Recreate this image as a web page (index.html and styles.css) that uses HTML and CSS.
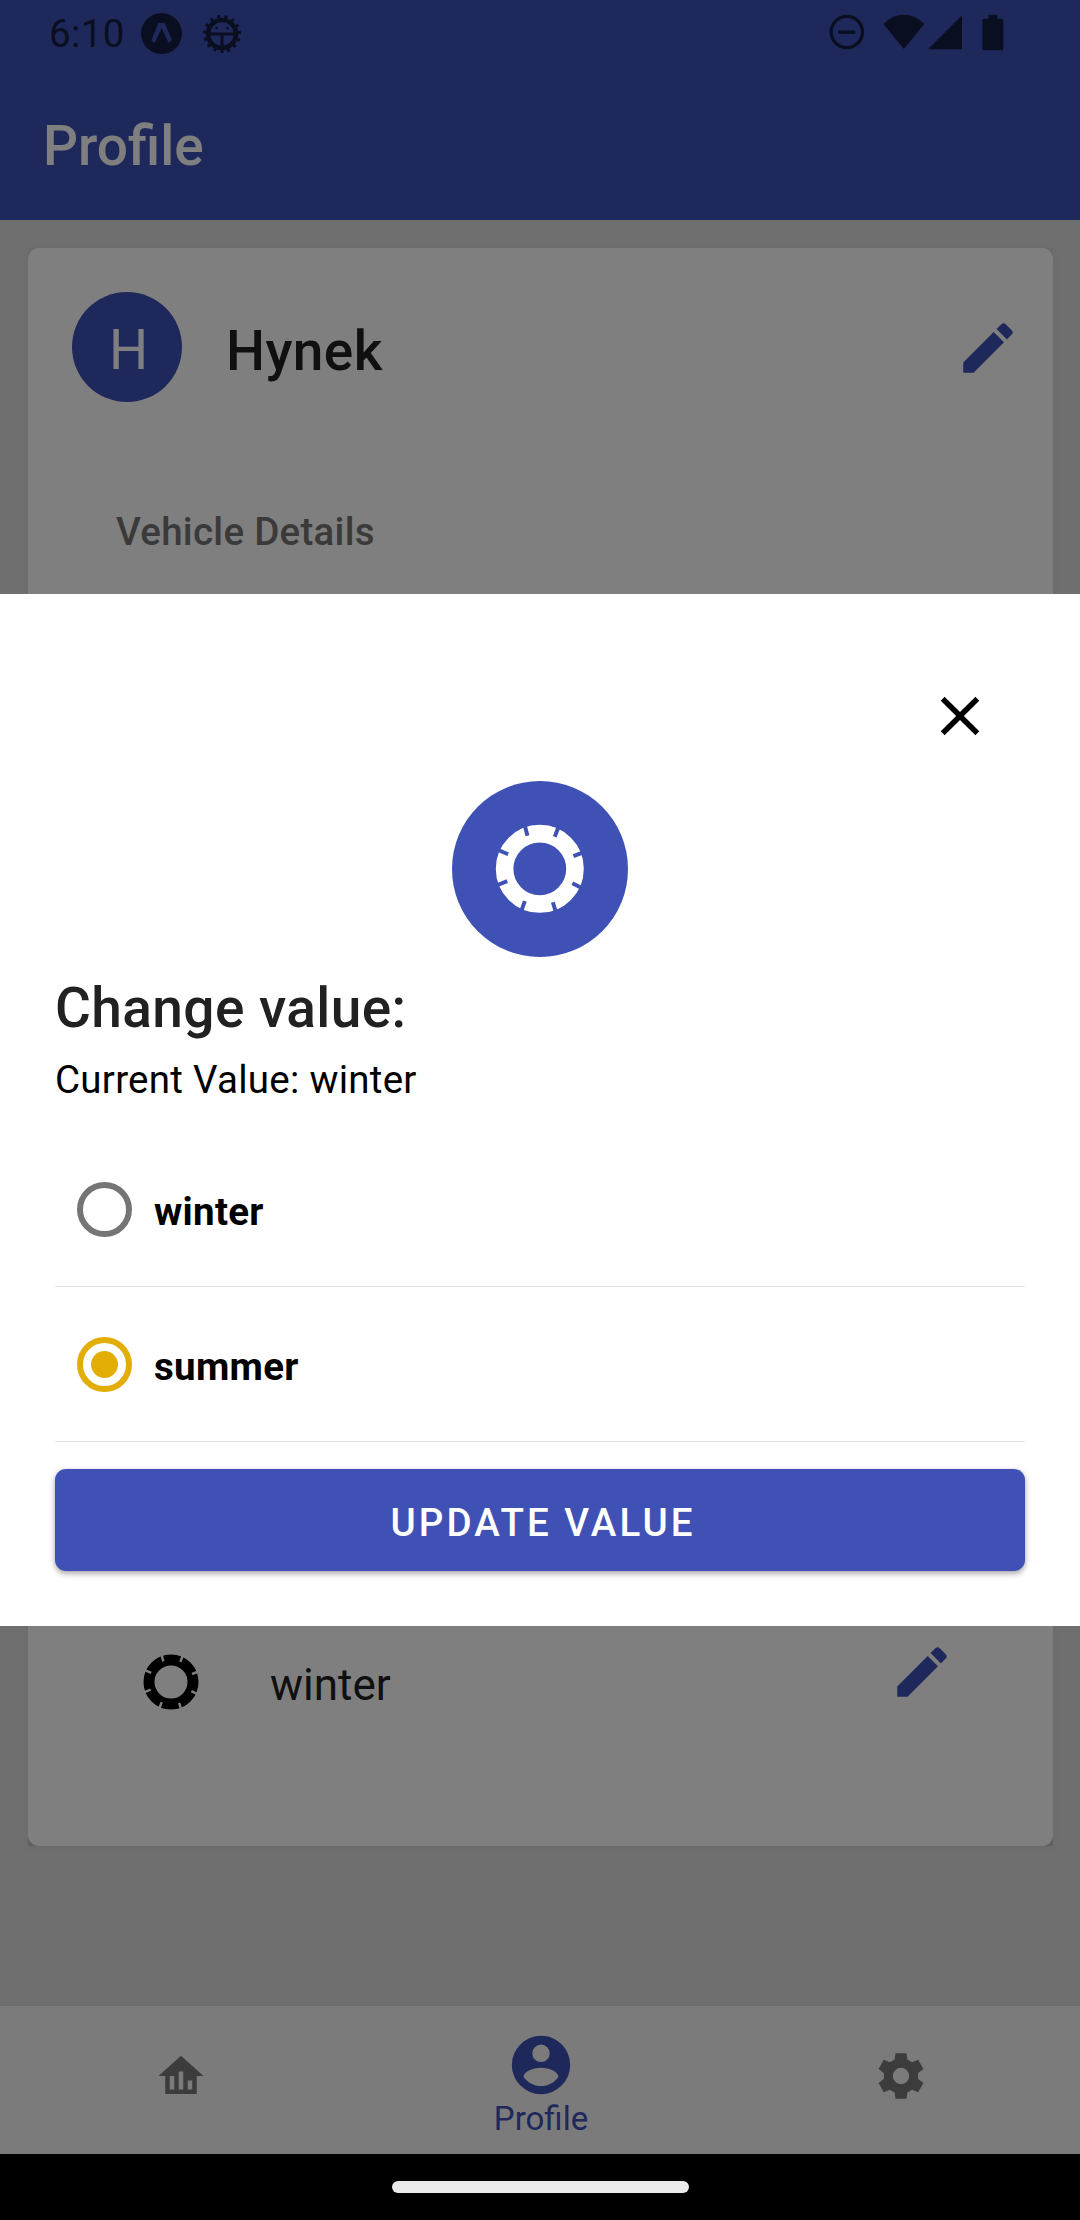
FILE: index.html
```html
<!DOCTYPE html>
<html lang="en">
<head>
<meta charset="utf-8">
<title>Profile</title>
<link rel="stylesheet" href="styles.css">
</head>
<body>
<svg width="0" height="0" class="defs">
  <defs>
    <mask id="tire-notches" maskUnits="userSpaceOnUse" x="-12" y="-12" width="24" height="24">
      <rect x="-12" y="-12" width="24" height="24" fill="#fff"/>
      <path d="M-3.5-10.2L-2.8-7.5M4.4-9.9L3.4-7.3M10.3-3.9L7.65-2.9" stroke="#000" stroke-width=".9"/>
      <path d="M10 4.6L7.4 3.3M3.8 10.3L2.96 7.6M-4.3 9.9L-3.4 7.35M-10 3.85L-7.4 2.8M-10-4.5L-7.2-3.3" stroke="#000" stroke-width=".9"/>
    </mask>
    <symbol id="tire" viewBox="-12 -12 24 24">
      <circle r="8" fill="none" stroke="currentColor" stroke-width="4" mask="url(#tire-notches)"/>
    </symbol>
    <symbol id="pencil" viewBox="0 0 24 24">
      <path fill="currentColor" d="M20.71,7.04C21.1,6.65 21.1,6 20.71,5.63L18.37,3.29C18,2.9 17.35,2.9 16.96,3.29L15.12,5.12L18.87,8.87M3,17.25V21H6.75L17.81,9.93L14.06,6.18L3,17.25Z"/>
    </symbol>
  </defs>
</svg>
<div class="screen">
  <div class="status-bar">
    <div class="status-left">
      <span class="clock">6:10</span>
      <svg class="expo" viewBox="423 39 123 123">
        <circle cx="484.500" cy="100.500" r="61.500" fill="currentColor"/>
        <path class="cutout" d="M475 69H494L516 121L506 129L485 84L464 129L454 122Z"/>
      </svg>
      <svg class="debug" viewBox="-60 -60 120 120">
        <circle r="42" fill="none" stroke="currentColor" stroke-width="14"/>
        <circle r="52.500" fill="none" stroke="currentColor" stroke-width="9" stroke-dasharray="10 14" pathLength="360" transform="rotate(85)"/>
        <path d="M-38 0H38M0 0V38" stroke="currentColor" stroke-width="9"/>
        <circle cx="-16" cy="-18" r="4" fill="currentColor"/>
        <circle cx="16" cy="-18" r="4" fill="currentColor"/>
      </svg>
    </div>
    <svg class="status-right" viewBox="140 40 540 120">
      <circle cx="199.500" cy="97" r="47" fill="none" stroke="currentColor" stroke-width="10"/>
      <path d="M174 97.500H225" stroke="currentColor" stroke-width="10"/>
      <path fill="currentColor" d="M309 73Q335 45 370.500 45Q406 45 432 73L370.500 148Z"/>
      <path fill="currentColor" d="M443 149H545V47Z"/>
      <path fill="currentColor" d="M624 45H651V57H664Q669 57 669 62V147Q669 152 664 152H611Q606 152 606 147V62Q606 57 611 57H624Z"/>
    </svg>
  </div>
  <header class="app-bar"><h1>Profile</h1></header>
  <main class="content">
    <div class="card-clip">
      <section class="card">
        <div class="card-head">
          <div class="avatar">H</div>
          <h2 class="name">Hynek</h2>
          <svg class="icon pencil"><use href="#pencil"/></svg>
        </div>
        <h3 class="section-label">Vehicle Details</h3>
        <div class="detail">
          <svg class="icon"><use href="#tire"/></svg>
          <span class="detail-value">winter</span>
          <svg class="icon pencil"><use href="#pencil"/></svg>
        </div>
      </section>
    </div>
  </main>
  <nav class="tabs">
    <div class="tab">
      <svg class="tab-icon" viewBox="0 0 24 24"><path fill="currentColor" fill-rule="evenodd" d="M5 20V12H2L12 3L22 12H19V20ZM7 12V18H9V12ZM11 10V18H13V10ZM15 14V18H17V14Z"/></svg>
    </div>
    <div class="tab active">
      <svg class="tab-icon" viewBox="0 0 24 24"><path fill="currentColor" d="M12,19.2C9.5,19.2 7.29,17.92 6,16C6.03,14 10,12.9 12,12.9C14,12.9 17.97,14 18,16C16.71,17.92 14.5,19.2 12,19.2M12,5A3,3 0 0,1 15,8A3,3 0 0,1 12,11A3,3 0 0,1 9,8A3,3 0 0,1 12,5M12,2A10,10 0 0,0 2,12A10,10 0 0,0 12,22A10,10 0 0,0 22,12C22,6.47 17.5,2 12,2Z"/></svg>
      <span>Profile</span>
    </div>
    <div class="tab">
      <svg class="tab-icon" viewBox="-81 -81 162 162"><path fill="currentColor" fill-rule="evenodd" d="M-16.500-68.500H16.500L19.500-49Q27-46 33-41L51.500-48.500L67.500-21L51-8Q52 0 51 8L67.500 21L51.500 48.500L33 41Q27 46 19.500 49L16.500 68.500H-16.500L-19.500 49Q-27 46-33 41L-51.500 48.500L-67.500 21L-51 8Q-52 0-51-8L-67.500-21L-51.500-48.500L-33-41Q-27-46-19.500-49ZM-24.500 0A24.500 24.500 0 1 0 24.500 0A24.500 24.500 0 1 0-24.500 0Z"/></svg>
    </div>
  </nav>
  <div class="system-bar"><div class="home-pill"></div></div>
  <div class="scrim">
    <div class="modal">
      <svg class="icon close" viewBox="0 0 24 24"><path d="M19,6.41L17.59,5L12,10.59L6.41,5L5,6.41L10.59,12L5,17.59L6.41,19L12,13.41L17.59,19L19,17.59L13.41,12L19,6.41Z"/></svg>
      <div class="badge"><svg class="badge-icon"><use href="#tire"/></svg></div>
      <h2 class="modal-title">Change value:</h2>
      <p class="current">Current Value: winter</p>
      <div class="option"><span class="radio"></span><span class="option-label">winter</span></div>
      <div class="option"><span class="radio checked"></span><span class="option-label">summer</span></div>
      <div class="button"><span>UPDATE VALUE</span></div>
    </div>
  </div>
</div>
</body>
</html>
```

FILE: styles.css
```css
* { box-sizing: border-box; }
body { margin: 0; font-family: Roboto, "Liberation Sans", sans-serif; color: #212121; }
h1, h2, h3, p { margin: 0; font-weight: 500; }
svg { display: block; flex: none; }
.defs { position: absolute; }

.screen {
  position: relative;
  width: 1080px;
  height: 2220px;
  display: flex;
  flex-direction: column;
  overflow: hidden;
  background: #dedede;
}

.status-bar {
  height: 66px;
  display: flex;
  justify-content: space-between;
  padding: 0 73px 0 49px;
  background: #3f51b5;
  color: #151d42;
}
.status-left { display: flex; }
.clock { width: 92px; padding-top: 12px; font-size: 38.5px; line-height: 44px; letter-spacing: .4px; }
.expo { width: 41px; height: 41px; margin-top: 13px; }
.cutout { fill: #3f51b5; }
.debug { width: 40px; height: 40px; margin: 13.5px 0 0 20px; }
.status-right { width: 180px; height: 40px; margin-top: 13.3px; }

.app-bar { height: 154px; padding: 47px 43px 0; background: #3f51b5; color: #fff; }
.app-bar h1 { font-size: 55px; line-height: 66px; }

.content { flex: 1; padding: 28px 27px 160px 28px; }
.card-clip { height: 1598px; background: linear-gradient(#d2d2d2, #c0c0c0); box-shadow: 0 2px 8px rgba(0, 0, 0, .04); }
.card { height: 100%; display: flex; flex-direction: column; border-radius: 11px; background: #fff; }
.card-head { display: flex; align-items: center; padding: 44px 32px 0 44px; }
.avatar {
  width: 110px;
  height: 110px;
  padding: 6px 0 0 3px;
  border-radius: 50%;
  background: #3f51b5;
  color: #fff;
  font-size: 55px;
  line-height: 104px;
  text-align: center;
}
.name { flex: 1; margin-left: 44px; padding-top: 8px; font-size: 55px; line-height: 66px; letter-spacing: .41px; }
.icon { width: 66px; height: 66px; }
.pencil { color: #3f51b5; }
.card-head .pencil { margin-top: 2px; }
.section-label { margin: 108px 0 0 88px; font-size: 38.5px; line-height: 44px; letter-spacing: .275px; color: #757575; }
.detail { display: flex; align-items: center; margin-top: auto; padding: 0 98px 131px 110px; color: #000; }
.detail-value { flex: 1; margin-left: 66px; padding-top: 6px; font-size: 44px; line-height: 60px; color: #212121; }
.detail .pencil { margin: -10px 0 10px; }

.tabs { height: 148px; display: grid; grid-template-columns: repeat(3, 1fr); background: #f7f7f7; color: #787878; box-shadow: 0 -1px 4px rgba(0, 0, 0, .04); }
.tab { display: flex; flex-direction: column; align-items: center; padding: 43px 0 0 1px; }
.tab-icon { width: 54px; height: 54px; }
.tab.active { padding: 24px 0 0 2px; color: #3f51b5; font-size: 33px; line-height: 38px; }
.active .tab-icon { width: 70px; height: 70px; }

.system-bar { position: relative; z-index: 2; height: 66px; display: flex; justify-content: center; padding-top: 27px; background: #000; }
.home-pill { width: 297px; height: 12px; border-radius: 6px; background: #ebebeb; }

.scrim { position: absolute; inset: 0; z-index: 1; display: flex; align-items: center; background: rgba(0, 0, 0, .5); }
.modal { width: 100%; height: 1032px; display: flex; flex-direction: column; padding: 89px 55px 55px; background: #fff; }
.close { align-self: flex-end; margin-right: 32px; fill: #000; }
.badge { width: 176px; height: 176px; display: grid; place-items: center; align-self: center; margin-top: 32px; border-radius: 50%; background: #3f51b5; color: #fff; }
.badge-icon { width: 105.6px; height: 105.6px; }
.modal-title { margin-top: 18px; font-size: 55px; line-height: 66px; letter-spacing: .41px; }
.current { margin: 17px 0 30px; font-size: 38.5px; font-weight: 400; line-height: 44px; letter-spacing: .275px; color: #000; }
.option { height: 155px; display: flex; align-items: center; padding: 1px 0 0 22px; border-bottom: 1px solid #e1e1e1; color: #000; }
.radio { width: 55px; height: 55px; display: grid; place-items: center; border: 6px solid #757575; border-radius: 50%; }
.radio.checked { border-color: #e2ae06; }
.radio.checked::after { content: ""; width: 27px; height: 27px; border-radius: 50%; background: #e2ae06; }
.option-label { margin-left: 22px; padding-top: 4px; font-size: 38.5px; font-weight: 700; line-height: 44px; letter-spacing: .3px; }
.button {
  height: 102px;
  margin-top: 27px;
  padding: 6px 0 0 6px;
  border-radius: 11px;
  background: #3f51b5;
  color: #fff;
  font-size: 38.5px;
  font-weight: 500;
  line-height: 96px;
  letter-spacing: 3.05px;
  text-align: center;
  box-shadow: 0 3px 6px rgba(0, 0, 0, .28), 0 1px 4px rgba(0, 0, 0, .12);
}
```
